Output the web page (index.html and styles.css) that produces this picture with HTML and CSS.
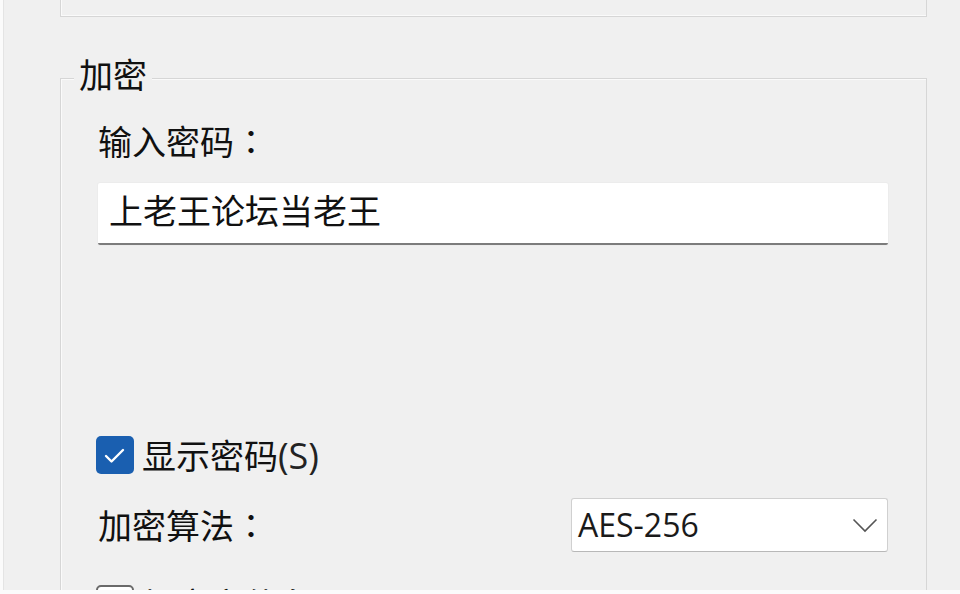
FILE: index.html
```html
<!DOCTYPE html>
<html lang="zh-CN">
<head>
<meta charset="utf-8">
<title>加密</title>
<link rel="stylesheet" href="styles.css">
</head>
<body>
<div class="window">
  <div class="top-box"></div>
  <div class="group">
    <div class="legend">加密</div>
    <div class="label pw-label">输入密码<span class="punct" lang="zh-TW">：</span></div>
    <div class="input">上老王论坛当老王</div>
    <div class="check-row show-row">
      <span class="checkbox checked">
        <svg width="38" height="38" viewBox="0 0 38 38"><polyline points="10,20 15.5,25.5 27,14" fill="none" stroke="#fff" stroke-width="2.4" stroke-linecap="round" stroke-linejoin="round"/></svg>
      </span>
      <span class="label">显示密码<span class="latin">(S)</span></span>
    </div>
    <div class="algo-row">
      <span class="label">加密算法<span class="punct" lang="zh-TW">：</span></span>
      <div class="combo">
        <span class="combo-text">AES-256</span>
        <svg class="chevron" width="26" height="15" viewBox="0 0 26 15"><polyline points="1.5,1.5 13,13 24.5,1.5" fill="none" stroke="#555" stroke-width="1.6"/></svg>
      </div>
    </div>
    <div class="check-row name-row">
      <span class="checkbox"></span>
      <span class="label">加密文件名</span>
    </div>
  </div>
</div>
</body>
</html>
```
FILE: styles.css
```css
html, body {
  margin: 0;
  padding: 0;
  background: #fbfbfb;
}
body {
  width: 960px;
  height: 594px;
  overflow: hidden;
  font-family: "Noto Sans CJK SC", "Noto Sans", sans-serif;
  color: #111;
}
.window {
  height: 590px;
  overflow: hidden;
  background: #f0f0f0;
  border-left: 1px solid #e4e4e4;
  margin-left: 3px;
  box-sizing: border-box;
  padding-left: 56px;
}
.top-box {
  width: 867px;
  height: 17px;
  box-sizing: border-box;
  border: 1px solid #d6d6d6;
  border-top: none;
  box-shadow: inset 1px -1px 0 #fafafa;
}
.group {
  width: 867px;
  height: 600px;
  margin-top: 61px;
  box-sizing: border-box;
  border: 1px solid #d6d6d6;
  box-shadow: inset 1px 1px 0 #fafafa;
  padding: 0 38px 0 37px;
}
.legend {
  display: block;
  width: fit-content;
  margin: -23px 0 0 -24px;
  padding: 0 5px;
  background: #f0f0f0;
  font-size: 34px;
  line-height: 36px;
  height: 36px;
}
.label {
  font-size: 34px;
  line-height: 36px;
}
.punct {
  font-family: "Noto Sans CJK TC", "Noto Sans CJK SC", sans-serif;
}
.pw-label {
  margin-top: 31px;
}
.input {
  margin-top: 24px;
  height: 62px;
  box-sizing: border-box;
  background: #fff;
  border-bottom: 2px solid #7c7c7c;
  border-radius: 2px;
  box-shadow: 0 0 0 1px #ececec;
  padding-left: 11px;
  font-size: 34px;
  line-height: 54px;
}
.check-row {
  display: flex;
  align-items: center;
  gap: 8px;
  margin-left: -2px;
}
.show-row {
  margin-top: 191px;
}
.checkbox {
  width: 38px;
  height: 38px;
  box-sizing: border-box;
  border-radius: 5px;
  border: 2px solid #6a6a6a;
  background: #fff;
  flex: none;
}
.checkbox.checked {
  border: none;
  background: #1a5fb0;
}
.checkbox svg {
  display: block;
}
.latin {
  font-family: "Open Sans", "Noto Sans", sans-serif;
  font-size: 36px;
  color: #222;
}
.algo-row {
  display: flex;
  align-items: center;
  justify-content: space-between;
  margin-top: 24px;
}
.combo {
  width: 317px;
  height: 54px;
  box-sizing: border-box;
  background: #fff;
  border: 1px solid #d0d0d0;
  border-bottom-color: #b8b8b8;
  border-radius: 3px;
  display: flex;
  align-items: center;
  justify-content: space-between;
  padding: 0 9px 0 6px;
}
.combo-text {
  font-family: "Open Sans", "Noto Sans", sans-serif;
  font-size: 32px;
  line-height: 40px;
  color: #1a1a1a;
}
.chevron {
  display: block;
}
.name-row {
  margin-top: 33px;
}
```
